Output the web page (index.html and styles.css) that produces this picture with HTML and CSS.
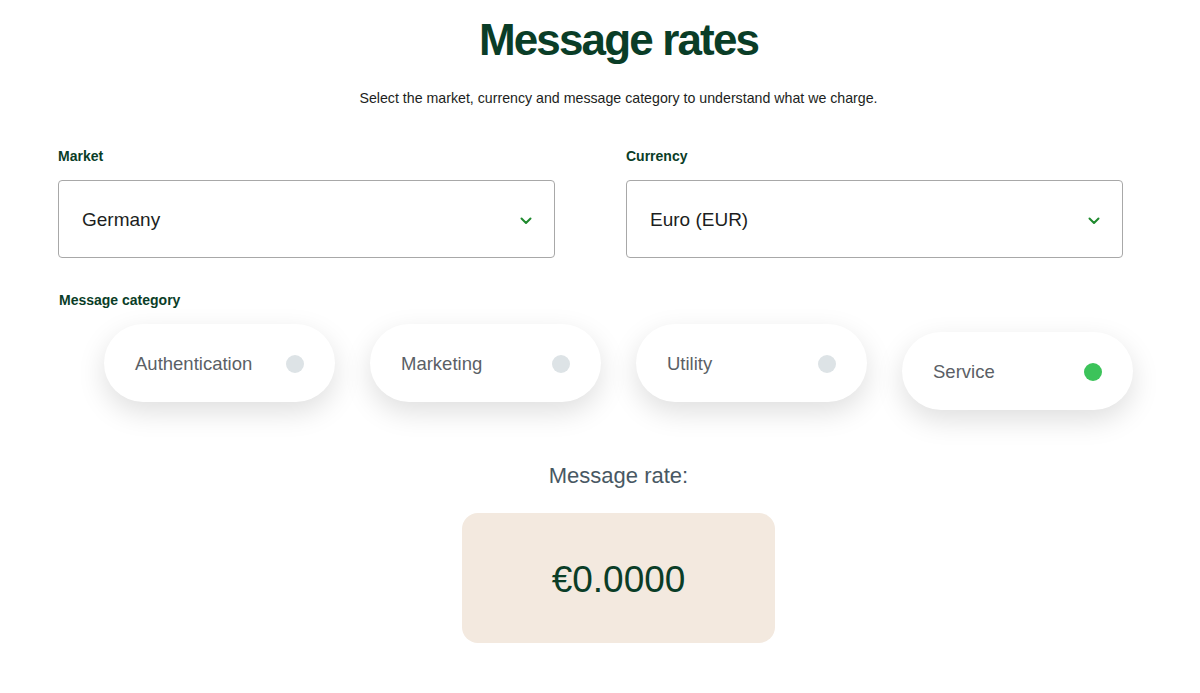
FILE: index.html
```html
<!DOCTYPE html>
<html lang="en">
<head>
    <meta charset="UTF-8">
    <meta name="viewport" content="width=device-width, initial-scale=1.0">
    <title>Message rates</title>
    <link rel="stylesheet" href="styles.css">
</head>
<body>
    <div class="page">
        <div class="intro">
            <h1>Message rates</h1>
            <p>Select the market, currency and message category to understand what we charge.</p>
        </div>

        <div class="filters">
            <div class="field">
                <label class="field-label">Market</label>
                <div class="select">
                    <span>Germany</span>
                    <svg class="chevron" width="12" height="8" viewBox="0 0 12 8"><path d="M1.5 1.5 L6 6 L10.5 1.5" fill="none" stroke="#1f8a2e" stroke-width="2" stroke-linecap="round" stroke-linejoin="round"/></svg>
                </div>
            </div>
            <div class="field">
                <label class="field-label">Currency</label>
                <div class="select">
                    <span>Euro (EUR)</span>
                    <svg class="chevron" width="12" height="8" viewBox="0 0 12 8"><path d="M1.5 1.5 L6 6 L10.5 1.5" fill="none" stroke="#1f8a2e" stroke-width="2" stroke-linecap="round" stroke-linejoin="round"/></svg>
                </div>
            </div>
        </div>

        <div class="category">
            <label class="field-label">Message category</label>
            <div class="pills">
                <div class="pill"><span>Authentication</span><span class="dot"></span></div>
                <div class="pill"><span>Marketing</span><span class="dot"></span></div>
                <div class="pill"><span>Utility</span><span class="dot"></span></div>
                <div class="pill active"><span>Service</span><span class="dot"></span></div>
            </div>
        </div>

        <div class="result">
            <h2>Message rate:</h2>
            <div class="rate-box">€0.0000</div>
        </div>
    </div>
</body>
</html>
```

FILE: styles.css
```css
* {
    margin: 0;
    padding: 0;
    box-sizing: border-box;
    font-family: 'Liberation Sans', Arial, sans-serif;
}

body {
    background-color: #ffffff;
    color: #1c1e21;
}

.page {
    padding: 17px 0 0 37px;
}

.intro {
    text-align: center;
}

.intro h1 {
    font-size: 44px;
    font-weight: bold;
    letter-spacing: -1.85px;
    color: #0a3d27;
    line-height: 46px;
}

.intro p {
    margin-top: 26px;
    font-size: 14.2px;
    line-height: 18px;
    color: #1c1e21;
}

.filters {
    display: flex;
    gap: 71px;
    margin: 40px 0 0 21px;
    width: 1065px;
}

.field {
    flex: 1;
}

.field-label {
    display: block;
    font-size: 14px;
    font-weight: bold;
    color: #0a3d27;
    line-height: 18px;
}

.select {
    margin-top: 15px;
    height: 78px;
    border: 1px solid #a8a8a8;
    border-radius: 4px;
    display: flex;
    align-items: center;
    justify-content: space-between;
    padding: 2px 22px 0 23px;
    font-size: 19px;
    color: #1c1e21;
}

.chevron {
    margin-top: 2px;
}

.category {
    margin-top: 33px;
}

.category .field-label {
    margin-left: 22px;
}

.pills {
    display: flex;
    justify-content: center;
    gap: 35px;
    margin-top: 15px;
}

.pill {
    width: 231px;
    height: 78px;
    border-radius: 39px;
    background: #ffffff;
    box-shadow: 0 10px 28px rgba(0, 0, 0, 0.13);
    display: flex;
    align-items: center;
    justify-content: space-between;
    padding: 1px 31px 0 31px;
    font-size: 18.5px;
    color: #5b5f66;
}

.dot {
    width: 18px;
    height: 18px;
    border-radius: 50%;
    background-color: #dde3e6;
}

.pill.active {
    transform: translateY(8px);
}

.pill.active .dot {
    background-color: #3cc35a;
}

.result {
    margin-top: 61px;
    text-align: center;
}

.result h2 {
    font-size: 22px;
    font-weight: normal;
    color: #485863;
    line-height: 26px;
}

.rate-box {
    width: 313px;
    height: 130px;
    margin: 24px auto 0;
    padding-top: 3px;
    background-color: #f3e9df;
    border-radius: 16px;
    display: flex;
    align-items: center;
    justify-content: center;
    font-size: 37px;
    color: #0a3d27;
}
```
